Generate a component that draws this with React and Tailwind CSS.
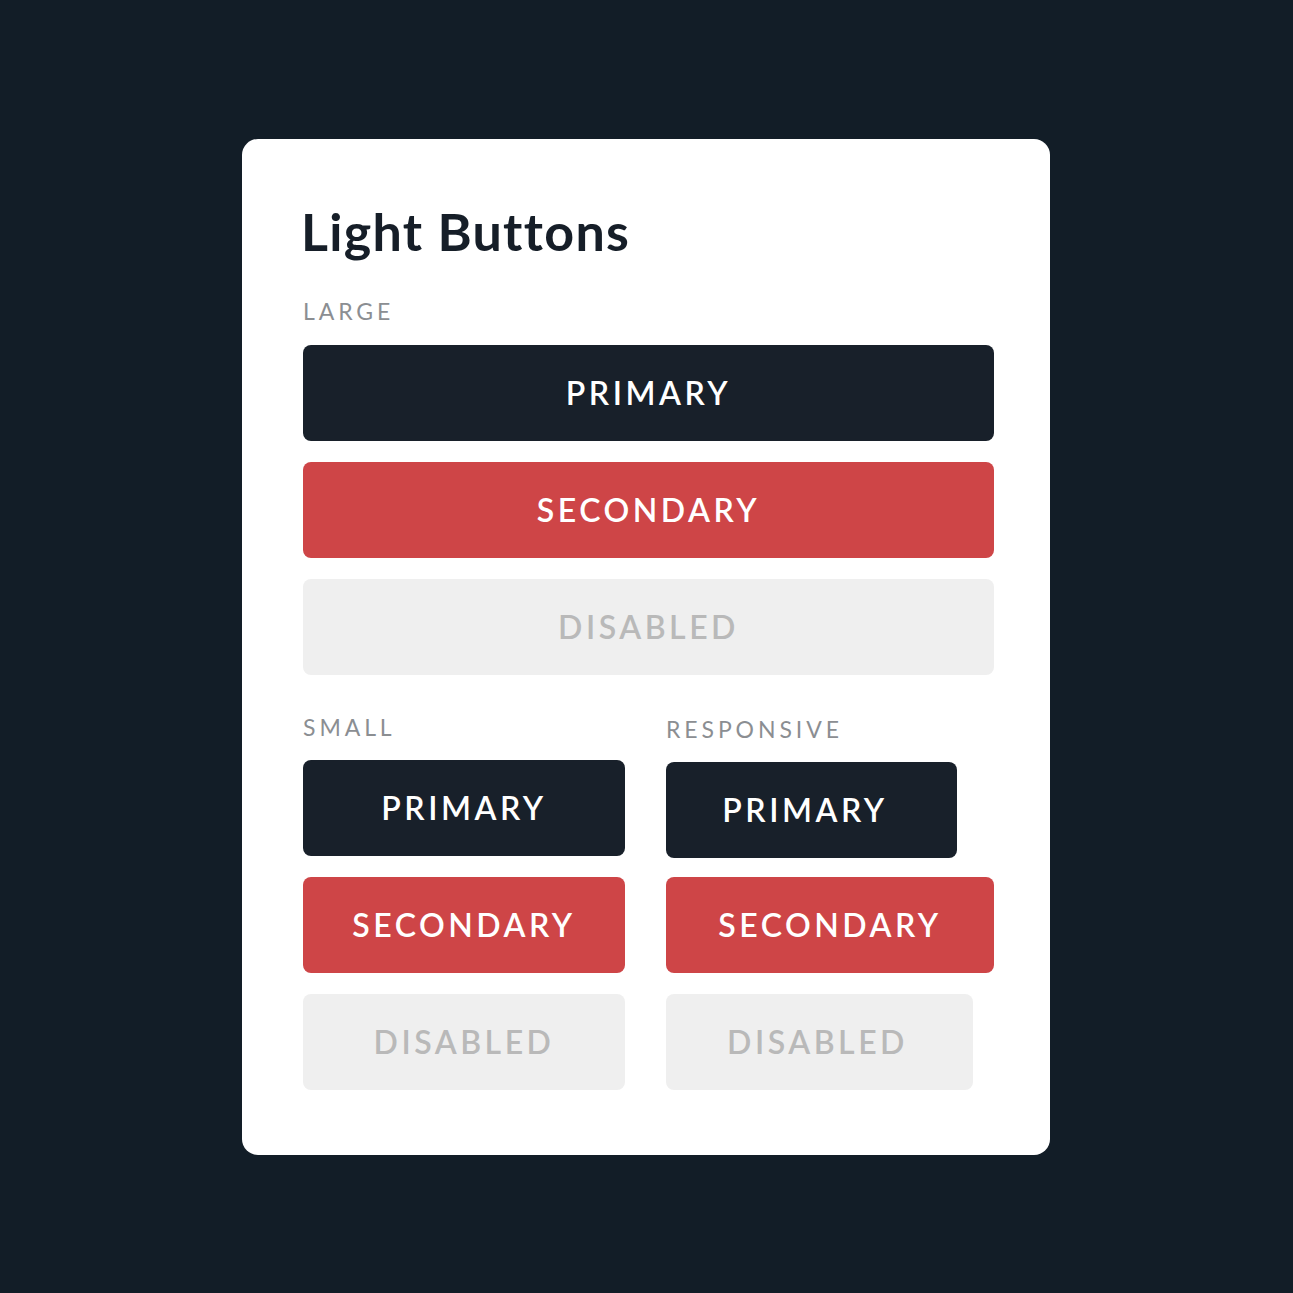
import React from 'react';

const font = { fontFamily: 'Lato, "Noto Sans", sans-serif' };

function Btn({ kind = 'primary', className = '', children }) {
  const styles = {
    primary: 'bg-[#18202a] text-white',
    secondary: 'bg-[#ce4547] text-white',
    disabled: 'bg-[#efefef] text-[#b9b9b9]',
  };
  return (
    <button
      className={`h-[96px] rounded-[8px] flex items-center justify-center text-[32px] font-semibold tracking-[0.11em] ${styles[kind]} ${className}`}
    >
      {children}
    </button>
  );
}

function Label({ className = '', children }) {
  return (
    <p className={`text-[23px] leading-none tracking-[0.17em] text-[#8b8e92] uppercase ${className}`}>
      {children}
    </p>
  );
}

export default function App() {
  return (
    <div style={font} className="min-h-[1293px] w-full bg-[#121d27] pt-[139px]">
      <div className="ml-[242px] w-[808px] h-[1016px] bg-white rounded-[16px] pl-[61px] pr-[56px] pt-[66px]">
        <h1 className="-ml-[2px] text-[52px] leading-none font-bold text-[#161e28] tracking-[0.025em]">Light Buttons</h1>

        {/* Large */}
        <Label className="mt-[43px]">Large</Label>
        <div className="mt-[22px] flex flex-col gap-[21px]">
          <Btn kind="primary" className="w-full">PRIMARY</Btn>
          <Btn kind="secondary" className="w-full">SECONDARY</Btn>
          <Btn kind="disabled" className="w-full">DISABLED</Btn>
        </div>

        {/* Small + Responsive */}
        <div className="mt-[41px] flex gap-[41px]">
          <div className="w-[322px]">
            <Label>Small</Label>
            <div className="mt-[21px] flex flex-col gap-[21px]">
              <Btn kind="primary" className="w-full">PRIMARY</Btn>
              <Btn kind="secondary" className="w-full">SECONDARY</Btn>
              <Btn kind="disabled" className="w-full">DISABLED</Btn>
            </div>
          </div>
          <div className="flex-1">
            <Label className="mt-[2px]">Responsive</Label>
            <div className="mt-[21px] flex flex-col items-start">
              <Btn kind="primary" className="w-[291px] pr-[13px]">PRIMARY</Btn>
              <Btn kind="secondary" className="w-[328px] mt-[19px]">SECONDARY</Btn>
              <Btn kind="disabled" className="w-[307px] mt-[21px] pr-[4px]">DISABLED</Btn>
            </div>
          </div>
        </div>
      </div>
    </div>
  );
}
